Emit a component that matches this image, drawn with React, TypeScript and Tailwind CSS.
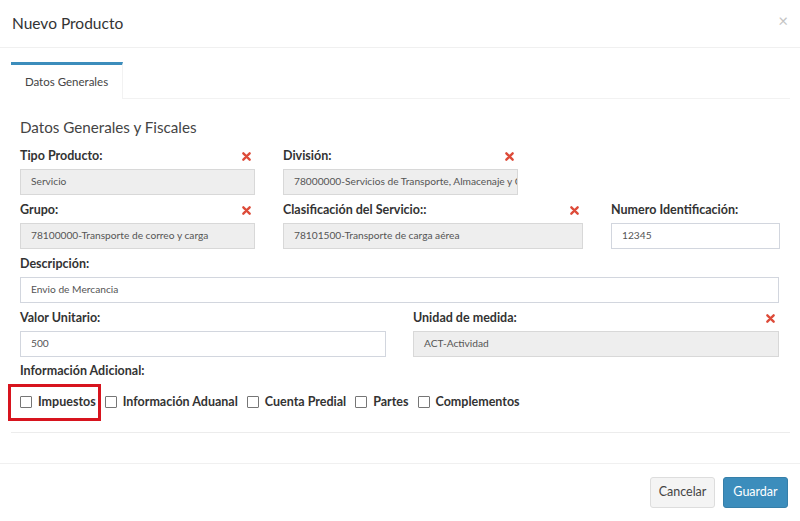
import React from 'react';

const font = { fontFamily: 'Lato, "Noto Sans", sans-serif' };

function RemoveMark() {
  return (
    <svg width="9" height="9" viewBox="0 0 10 10" className="shrink-0">
      <path d="M1.5 1.5 L8.5 8.5 M8.5 1.5 L1.5 8.5" stroke="#dd4b39" strokeWidth="2.6" strokeLinecap="round" />
    </svg>
  );
}

function Field({
  label,
  value,
  width,
  disabled,
  removable,
}: {
  label: string;
  value: string;
  width: string;
  disabled?: boolean;
  removable?: boolean;
}) {
  return (
    <div className={`${width} flex flex-col shrink-0`}>
      <div className="flex items-center justify-between h-[14px] pr-[4px]">
        <span className="text-[12.5px] font-bold text-[#333]">{label}</span>
        {removable && <RemoveMark />}
      </div>
      <div
        className={`mt-[6px] h-[26px] flex items-center px-[10px] text-[10.2px] text-[#555] border overflow-hidden whitespace-nowrap ${
          disabled ? 'bg-[#eeeeee] border-[#d8d8d8]' : 'bg-white border-[#d2d6de]'
        }`}
      >
        {value}
      </div>
    </div>
  );
}

function Check({ label }: { label: string }) {
  return (
    <label className="flex items-center gap-[6px] h-[14px]">
      <span className="w-[12px] h-[12px] border border-[#767676] rounded-[1px] bg-white" />
      <span className="text-[12.5px] font-bold text-[#333]">{label}</span>
    </label>
  );
}

export default function App() {
  return (
    <div className="w-[800px] h-[521px] bg-white overflow-hidden" style={font}>
      {/* Header */}
      <div className="h-[48px] border-b border-[#f0f0f0] flex items-center justify-between pl-[12px] pr-[12px]">
        <h4 className="text-[15.5px] text-[#333]">Nuevo Producto</h4>
        <span className="text-[17px] text-[#c4c4c4] leading-none -mt-[6px]">×</span>
      </div>

      {/* Body */}
      <div className="pl-[11px] pr-[10px] pt-[14px]">
        <div className="flex border-b border-[#f2f2f2]">
          <div className="w-[112px] h-[37px] border-t-[3px] border-t-[#3c8dbc] border-r border-r-[#f2f2f2] flex items-center justify-center text-[11.5px] text-[#444] bg-white -mb-px">
            Datos Generales
          </div>
        </div>

        <div className="border-b border-[#ececec] pl-[9px] pb-[23px]">
          <h3 className="text-[15.2px] text-[#444] pt-[18px] leading-[20px]">Datos Generales y Fiscales</h3>

          <div className="flex gap-[28px] mt-[12px]">
            <Field label="Tipo Producto:" value="Servicio" width="w-[235px]" disabled removable />
            <Field
              label="División:"
              value="78000000-Servicios de Transporte, Almacenaje y Correo"
              width="w-[235px]"
              disabled
              removable
            />
          </div>

          <div className="flex gap-[28px] mt-[8px]">
            <Field label="Grupo:" value="78100000-Transporte de correo y carga" width="w-[235px]" disabled removable />
            <Field
              label="Clasificación del Servicio::"
              value="78101500-Transporte de carga aérea"
              width="w-[300px]"
              disabled
              removable
            />
            <Field label="Numero Identificación:" value="12345" width="w-[169px]" />
          </div>

          <div className="flex mt-[8px]">
            <Field label="Descripción:" value="Envio de Mercancia" width="w-[759px]" />
          </div>

          <div className="flex gap-[27px] mt-[8px]">
            <Field label="Valor Unitario:" value="500" width="w-[366px]" />
            <Field label="Unidad de medida:" value="ACT-Actividad" width="w-[366px]" disabled removable />
          </div>

          <div className="mt-[7px] h-[14px] leading-[14px] text-[12.5px] font-bold text-[#333]">Información Adicional:</div>

          <div className="relative flex items-center gap-[9px] mt-[17px]">
            <div className="absolute left-[-12px] top-[-11px] w-[93px] h-[37px] border-[3px] border-[#d7141e]" />
            <Check label="Impuestos" />
            <Check label="Información Aduanal" />
            <Check label="Cuenta Predial" />
            <Check label="Partes" />
            <Check label="Complementos" />
          </div>
        </div>
      </div>

      {/* Footer */}
      <div className="mt-[30px] border-t border-[#f0f0f0] flex justify-end gap-[8px] pr-[12px] pt-[13px]">
        <button className="w-[65px] h-[31px] rounded-[3px] bg-[#f4f4f4] border border-[#ddd] text-[12.5px] text-[#444]">
          Cancelar
        </button>
        <button className="w-[65px] h-[31px] rounded-[3px] bg-[#3c8dbc] border border-[#367fa9] text-[12.5px] text-white">
          Guardar
        </button>
      </div>
    </div>
  );
}
